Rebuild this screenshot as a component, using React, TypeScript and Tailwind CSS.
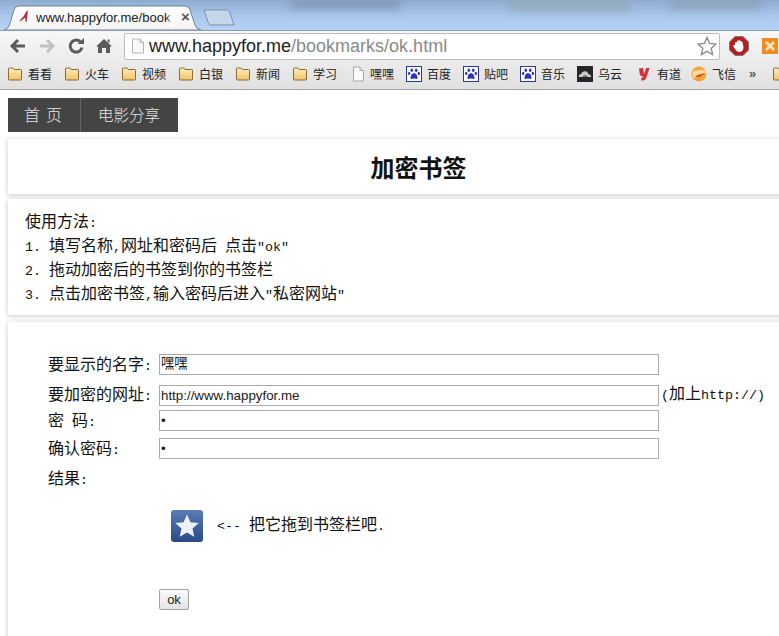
import React from "react";

const cjk = "font-['Liberation_Mono','Noto_Sans_CJK_SC',monospace]";

function L({ children }: { children: React.ReactNode }) {
  return <span className="text-[13.33px] whitespace-pre">{children}</span>;
}

function Folder() {
  return (
    <svg width="16" height="14" viewBox="0 0 16 14" className="shrink-0">
      <defs>
        <linearGradient id="fg" x1="0" y1="0" x2="0" y2="1">
          <stop offset="0" stopColor="#fdeebc" />
          <stop offset="1" stopColor="#f2c267" />
        </linearGradient>
      </defs>
      <path d="M1.5 3V1.8Q1.5 1 2.3 1H6L7.2 2.5H13.7Q14.5 2.5 14.5 3.3V12.2Q14.5 13 13.7 13H2.3Q1.5 13 1.5 12.2Z" fill="url(#fg)" stroke="#8a6b33" />
    </svg>
  );
}

function Page() {
  return (
    <svg width="14" height="16" viewBox="0 0 14 16" className="shrink-0">
      <path d="M2.5 1H9L12.5 4.5V15H2.5Z" fill="#fafafa" stroke="#a8a8a8" />
      <path d="M9 1V4.5H12.5" fill="#e8e8e8" stroke="#a8a8a8" />
    </svg>
  );
}

function Paw() {
  return (
    <svg width="16" height="16" viewBox="0 0 16 16" className="shrink-0">
      <rect x="0.5" y="0.5" width="15" height="15" fill="#fff" stroke="#2a35a8" />
      <g fill="#2b33c8">
        <ellipse cx="5.8" cy="4.2" rx="1.3" ry="1.7" />
        <ellipse cx="10.2" cy="4.2" rx="1.3" ry="1.7" />
        <ellipse cx="3.2" cy="7.4" rx="1.2" ry="1.6" />
        <ellipse cx="12.8" cy="7.4" rx="1.2" ry="1.6" />
        <path d="M8 7Q10 7 11 9.5T11 13Q9.5 12.4 8 12.4T5 13Q4 12 5 9.5T8 7Z" />
      </g>
    </svg>
  );
}

function Cloud() {
  return (
    <svg width="16" height="16" viewBox="0 0 16 16" className="shrink-0">
      <rect width="16" height="16" fill="#26262a" />
      <path d="M2 11Q1 8.5 4 8Q5 5 8 5.2Q11 5.5 11.3 8Q14.5 8.5 14 11Z" fill="#c9c9c9" />
      <path d="M6 11Q5.5 9 8 9T11 11Z" fill="#777" />
    </svg>
  );
}

function Youdao() {
  return (
    <svg width="16" height="16" viewBox="0 0 16 16" className="shrink-0">
      <path d="M3 2.5L7 2L8 8L10.2 2H13.6L10.2 12Q9.4 14.6 5.5 14.6L5 12Q7 12 7.3 10.8Q4 10.5 3.6 7Z" fill="#d8303a" />
    </svg>
  );
}

function Fetion() {
  return (
    <svg width="16" height="16" viewBox="0 0 16 16" className="shrink-0">
      <circle cx="8" cy="8" r="7.5" fill="#f6a53c" />
      <path d="M1.5 6Q6 3 14 4.5Q15 6 15 7.5Q10 7 6 9Q4 10 3.5 12.5Q1 10 1.5 6Z" fill="#f9d9a0" />
      <path d="M4.5 11Q8 7.5 14.5 7.5Q11 9 8.5 11Z" fill="#d9481c" />
    </svg>
  );
}

const bookmarks: [string, React.ReactNode, string][] = [
  ["看看", <Folder />, "w-[57px]"],
  ["火车", <Folder />, "w-[57px]"],
  ["视频", <Folder />, "w-[57px]"],
  ["白银", <Folder />, "w-[57px]"],
  ["新闻", <Folder />, "w-[57px]"],
  ["学习", <Folder />, "w-[59px]"],
  ["嘿嘿", <Page />, "w-[55px]"],
  ["百度", <Paw />, "w-[57px]"],
  ["贴吧", <Paw />, "w-[57px]"],
  ["音乐", <Paw />, "w-[57px]"],
  ["乌云", <Cloud />, "w-[59px]"],
  ["有道", <Youdao />, "w-[55px]"],
  ["飞信", <Fetion />, "w-[59px]"],
];

function Field({
  label,
  value,
  note,
  sans,
  labelClass,
  className,
}: {
  label: React.ReactNode;
  value: string;
  note?: React.ReactNode;
  sans?: boolean;
  labelClass: string;
  className: string;
}) {
  return (
    <div className={`flex h-[21px] ${className}`}>
      <span className={`w-[111px] shrink-0 whitespace-pre text-[16px] leading-[21px] ${labelClass}`}>{label}</span>
      <div
        className={`w-[500px] h-[21px] shrink-0 border border-[#ababab] bg-white pl-[1px] leading-[19px] text-[#1a1a1a] overflow-hidden text-[13.33px] ${
          sans ? "font-['Liberation_Sans','Noto_Sans_CJK_SC',sans-serif]" : ""
        }`}
      >
        {value}
      </div>
      {note && <span className="ml-[2px] whitespace-nowrap text-[16px] leading-[21px]">{note}</span>}
    </div>
  );
}

export default function App() {
  return (
    <div className={`w-[779px] h-[636px] overflow-hidden bg-white text-[#111] ${cjk}`}>
      {/* tab strip */}
      <div className="relative h-[30px] bg-gradient-to-b from-[#8eabd0] via-[#a8c6ea] to-[#b5d4f7] flex items-end pl-[4px]">
        <div className="absolute top-0 left-[510px] w-[120px] h-[10px] bg-[#93aab8] blur-[4px]" />
        <div className="absolute top-0 left-[290px] w-[110px] h-[8px] bg-[#7d95b3] blur-[4px]" />
        <div className="absolute top-0 left-[670px] w-[90px] h-[8px] bg-[#8aa0b5] blur-[4px]" />
        <div className="relative w-[200px] h-[25px] font-['Liberation_Sans',sans-serif]">
          <svg width="200" height="25" viewBox="0 0 200 25" className="absolute inset-0">
            <defs>
              <linearGradient id="tab" x1="0" y1="0" x2="0" y2="1">
                <stop offset="0" stopColor="#ffffff" />
                <stop offset="1" stopColor="#f4f4f4" />
              </linearGradient>
            </defs>
            <path d="M0 25Q4 24 5.5 20L10 5Q11 1 15 1H181Q185 1 186 5L191 20Q192 24 197 25Z" fill="url(#tab)" stroke="#6f8199" />
          </svg>
          <svg width="12" height="14" viewBox="0 0 12 14" className="absolute left-[15px] top-[4px]">
            <path d="M9 1L7.5 13H6.5L6.2 8.5L1 12.5Q0.5 11 2 10Q5 8 7 3Z" fill="#c3232e" />
          </svg>
          <div className="absolute left-[32px] top-[4px] w-[138px] overflow-hidden whitespace-nowrap text-[13px] leading-[18px] text-[#222]">
            www.happyfor.me/book
            <div className="absolute right-0 top-0 h-full w-[8px] bg-gradient-to-r from-transparent to-white" />
          </div>
          <span className="absolute left-[177px] top-[3px] text-[15px] leading-[18px] font-bold text-[#555]">×</span>
        </div>
        <svg width="32" height="17" viewBox="0 0 32 17" className="mb-[4px] -ml-[1px] shrink-0">
          <path d="M1 1H24Q26 1 27 4L31 16H8Q6 16 5 13Z" fill="#c5d6ea" stroke="#7f93ac" />
        </svg>
      </div>

      {/* toolbar */}
      <div className="h-[30px] bg-gradient-to-b from-[#f8f8f8] to-[#ececec] border-t border-[#8a9cb3] flex items-center pl-[9px] relative">
        <svg width="18" height="16" viewBox="0 0 18 16" className="shrink-0">
          <path d="M16 8H4M9 2L3 8L9 14" fill="none" stroke="#5b5b5b" strokeWidth="3" />
        </svg>
        <svg width="18" height="16" viewBox="0 0 18 16" className="ml-[11px] shrink-0">
          <path d="M2 8H14M9 2L15 8L9 14" fill="none" stroke="#c2c2c2" strokeWidth="3" />
        </svg>
        <svg width="18" height="18" viewBox="0 0 18 18" className="ml-[11px] shrink-0">
          <path d="M14 5.5A6 6 0 1 0 15 10.5" fill="none" stroke="#5b5b5b" strokeWidth="3" />
          <path d="M10.5 7H17V1Z" fill="#5b5b5b" />
        </svg>
        <svg width="16" height="16" viewBox="0 0 16 16" className="ml-[11px] shrink-0">
          <path d="M8 1L16 8.5H14V15H10V10H6V15H2V8.5H0ZM11.5 1.5H13.5V5L11.5 3.5Z" fill="#5b5b5b" />
        </svg>
        <div className="ml-[12px] w-[596px] h-[27px] mt-[1px] bg-white border border-[#bcbcbc] rounded-[2px] flex items-center pl-[6px] font-['Liberation_Sans',sans-serif] shrink-0">
          <svg width="14" height="16" viewBox="0 0 14 16" className="shrink-0">
            <path d="M1.5 1H9L12.5 4.5V15H1.5Z" fill="#fafafa" stroke="#b5b5b5" />
            <path d="M9 1V4.5H12.5" fill="none" stroke="#b5b5b5" />
          </svg>
          <span className="ml-[4px] text-[18px] leading-[24px] whitespace-nowrap text-[#222]">
            www.happyfor.me<span className="text-[#8a8a8a]">/bookmarks/ok.html</span>
          </span>
          <svg width="20" height="20" viewBox="0 0 20 20" className="ml-auto mr-[2px] shrink-0">
            <path d="M10 1.5L12.6 7.4L19 8L14.2 12.3L15.6 18.6L10 15.3L4.4 18.6L5.8 12.3L1 8L7.4 7.4Z" fill="#fff" stroke="#8c8c8c" strokeWidth="1.4" />
          </svg>
        </div>
        <svg width="20" height="20" viewBox="0 0 20 20" className="ml-[9px] shrink-0">
          <path d="M6 0.5H14L19.5 6V14L14 19.5H6L0.5 14V6Z" fill="#b4201e" stroke="#777" />
          <path d="M6 9V6.5Q7 5.8 7.5 6.5Q8 4 9.5 4.5Q11 3.8 11.7 5.2Q13 5 13.5 6.5L14.5 11Q14.5 16 10 16Q7.5 16 6 13L4 10Q5 8.8 6 9Z" fill="#fff" />
        </svg>
        <svg width="16" height="16" viewBox="0 0 16 16" className="ml-[13px] shrink-0">
          <rect width="16" height="16" fill="#f08a24" />
          <path d="M4 4L12 12M12 4L4 12" stroke="#fde7b8" strokeWidth="2.5" />
        </svg>
      </div>

      {/* bookmarks */}
      <div className="h-[30px] bg-gradient-to-b from-[#ececec] to-[#e0e0e0] border-b border-[#a4a4a4] flex items-center pl-[7px] pb-[1px] overflow-hidden">
        {bookmarks.map(([name, icon, w]) => (
          <div key={name} className={`flex items-center gap-[5px] shrink-0 ${w}`}>
            {icon}
            <span className="text-[12px] leading-[16px] text-[#222] font-['Noto_Sans_CJK_SC',sans-serif] whitespace-nowrap">{name}</span>
          </div>
        ))}
        <span className="text-[13px] font-bold text-[#555] ml-[-1px] font-['Liberation_Sans',sans-serif]">»</span>
        <div className="ml-[9px] w-px h-[18px] bg-[#c8c8c8]" />
        <div className="ml-[7px] shrink-0">
          <Folder />
        </div>
      </div>

      {/* site nav */}
      <div className="ml-[8px] mt-[8px] w-[170px] h-[34px] bg-[#444444] flex text-[16px] leading-[33px] text-[#e4e4e4] font-['Noto_Sans_CJK_SC',sans-serif] font-light">
        <div className="w-[73px] pl-[16px] border-r border-[#666] flex gap-[6px]">
          <span>首</span>
          <span>页</span>
        </div>
        <div className="pl-[17px] text-[15.5px] whitespace-nowrap">电影分享</div>
      </div>

      {/* title card */}
      <div className="ml-[8px] mt-[7px] w-[821px] h-[55px] bg-white shadow-[0_1px_5px_rgba(0,0,0,0.22)] flex items-center justify-center">
        <h1 className="text-[24px] leading-[30px] font-bold text-[#111] font-['Noto_Sans_CJK_SC',sans-serif]">加密书签</h1>
      </div>

      {/* usage card */}
      <div className="ml-[8px] mt-[5px] w-[821px] h-[116px] bg-white shadow-[0_1px_5px_rgba(0,0,0,0.22)] pl-[17px] pt-[12px] text-[16px] leading-[24px]">
        <div className="h-[24px]">使用方法<L>:</L></div>
        <div className="flex h-[24px]"><span className="w-[24px]"><L>1.</L></span><span>填写名称<L>,</L>网址和密码后<L> </L>点击<L>"ok"</L></span></div>
        <div className="flex h-[24px]"><span className="w-[24px]"><L>2.</L></span><span>拖动加密后的书签到你的书签栏</span></div>
        <div className="flex h-[24px]"><span className="w-[24px]"><L>3.</L></span><span>点击加密书签<L>,</L>输入密码后进入<L>"</L>私密网站<L>"</L></span></div>
      </div>

      {/* form card */}
      <div className="ml-[8px] mt-[7px] w-[821px] h-[340px] bg-white shadow-[0_1px_5px_rgba(0,0,0,0.22)] pl-[40px] pt-[32px]">
        <Field label={<>要显示的名字<L>:</L></>} value="嘿嘿" labelClass="pt-[2px]" className="" />
        <Field label={<>要加密的网址<L>:</L></>} value="http://www.happyfor.me" sans note={<><L>(</L>加上<L>http://)</L></>} labelClass="pt-[1px]" className="mt-[10px]" />
        <Field label={<>密<L> </L>码<L>:</L></>} value="•" sans labelClass="pt-[2px]" className="mt-[4px]" />
        <Field label={<>确认密码<L>:</L></>} value="•" sans labelClass="pt-[2px]" className="mt-[7px]" />
        <div className="mt-[10px] h-[22px] text-[16px] leading-[22px]">结果<L>:</L></div>
        <div className="mt-[19px] ml-[123px] flex items-center h-[32px]">
          <svg width="32" height="32" viewBox="0 0 32 32" className="shrink-0">
            <defs>
              <linearGradient id="st" x1="0" y1="0" x2="0" y2="1">
                <stop offset="0" stopColor="#5a7db5" />
                <stop offset="1" stopColor="#284a86" />
              </linearGradient>
            </defs>
            <rect width="32" height="32" rx="3" fill="url(#st)" />
            <path d="M16 4.5L19.4 12.2L27.8 13L21.5 18.6L23.3 26.8L16 22.5L8.7 26.8L10.5 18.6L4.2 13L12.6 12.2Z" fill="#eef1f7" />
          </svg>
          <span className="ml-[14px] text-[16px] leading-[24px] whitespace-pre"><L>{"<-- "}</L>把它拖到书签栏吧<L>.</L></span>
        </div>
        <div className="mt-[47px] ml-[111px] w-[30px] h-[21px] border border-[#a3a3a3] rounded-[2px] bg-gradient-to-b from-[#fbfbfb] to-[#e4e4e4] text-center text-[13px] leading-[19px] text-[#222] font-['Liberation_Sans',sans-serif]">
          ok
        </div>
      </div>
    </div>
  );
}
